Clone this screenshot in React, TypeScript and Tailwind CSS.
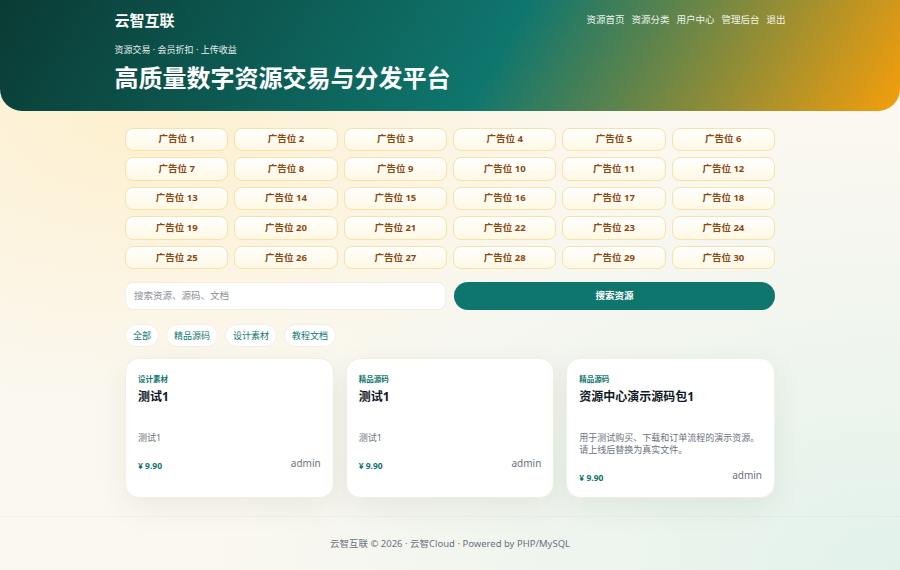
export default function App() {
  const ads = Array.from({ length: 30 }, (_, i) => i + 1);
  const nav = ["资源首页", "资源分类", "用户中心", "管理后台", "退出"];
  const pills = ["全部", "精品源码", "设计素材", "教程文档"];
  const cards = [
    { cat: "设计素材", title: "测试1", desc: "测试1" },
    { cat: "精品源码", title: "测试1", desc: "测试1" },
    {
      cat: "精品源码",
      title: "资源中心演示源码包1",
      desc: "用于测试购买、下载和订单流程的演示资源。请上线后替换为真实文件。",
    },
  ];
  return (
    <div className="min-h-[570px] flex flex-col font-['Noto_Sans','Noto_Sans_CJK_SC',sans-serif] bg-[#fbf8f1] bg-[radial-gradient(ellipse_at_15%_20%,#fdf0cf_0%,rgba(253,240,207,0)_45%),radial-gradient(ellipse_at_100%_100%,#e2f2eb_0%,rgba(226,242,235,0)_55%)]">
      <header className="rounded-b-[22px] bg-[linear-gradient(120deg,#0a3b34_0%,#0f766e_55%,#f59e0b_100%)] text-white">
        <div className="w-[671px] mx-auto pt-[10px] pb-[18px]">
          <div className="flex items-center justify-between h-[20px]">
            <div className="text-[15px] font-bold leading-[20px]">云智互联</div>
            <nav className="flex gap-[7px] text-[9.5px] leading-[14px] text-white/90">
              {nav.map((n) => (
                <span key={n}>{n}</span>
              ))}
            </nav>
          </div>
          <p className="mt-[13px] text-[9px] leading-[13.5px] text-white/90">
            资源交易 · 会员折扣 · 上传收益
          </p>
          <h1 className="mt-[5px] text-[24px] font-bold leading-[31px]">
            高质量数字资源交易与分发平台
          </h1>
        </div>
      </header>

      <main className="w-[650px] mx-auto pt-[17px] pb-[18px]">
        <div className="grid grid-cols-6 gap-[6px]">
          {ads.map((n) => (
            <div
              key={n}
              className="h-[23.6px] flex items-center justify-center rounded-[8px] border border-[#f8e2a8] bg-[linear-gradient(180deg,#ffffff_0%,#fff8e4_100%)] text-[9.5px] font-bold text-[#8a4a12]"
            >
              广告位 {n}
            </div>
          ))}
        </div>

        <div className="mt-[13px] grid grid-cols-2 gap-[8px] h-[27.5px]">
          <div className="flex items-center rounded-[8px] bg-white border border-[#f3efe6] px-[8px] text-[9.5px] text-[#8b8f97]">
            搜索资源、源码、文档
          </div>
          <div className="flex items-center justify-center rounded-full bg-[#0f766e] text-white text-[9.5px] font-bold">
            搜索资源
          </div>
        </div>

        <div className="mt-[14.5px] flex gap-[7px]">
          {pills.map((p) => (
            <div
              key={p}
              className="h-[22.4px] flex items-center px-[7px] rounded-full bg-white border border-[#f3efe6] text-[9px] text-[#0f766e]"
            >
              {p}
            </div>
          ))}
        </div>

        <div className="mt-[11.5px] grid grid-cols-3 gap-[12px]">
          {cards.map((c, i) => (
            <div
              key={i}
              className="rounded-[14px] bg-white border border-[#f2eee6] shadow-[0_10px_30px_rgba(60,50,20,0.07)] px-[12px] pt-[14px] pb-[15px]"
            >
              <div className="text-[7.5px] leading-[12px] font-bold text-[#0f766e]">{c.cat}</div>
              <div className="mt-[3px] text-[12px] leading-[18px] font-bold text-[#111827]">{c.title}</div>
              <p className="mt-[26px] text-[9px] leading-[11.7px] text-[#6b7280]">{c.desc}</p>
              <div className="mt-[12px] flex items-end justify-between">
                <span className="-mb-[2px] text-[8.5px] leading-[12px] font-bold text-[#0f766e]">¥ 9.90</span>
                <span className="text-[10px] leading-[14px] text-[#6b7280]">admin</span>
              </div>
            </div>
          ))}
        </div>
      </main>

      <footer className="mt-auto border-t border-black/[0.025] py-[20px] text-center text-[9.5px] leading-[14px] text-[#6b7280]">
        云智互联 © 2026 · 云智Cloud · Powered by PHP/MySQL
      </footer>
    </div>
  );
}
